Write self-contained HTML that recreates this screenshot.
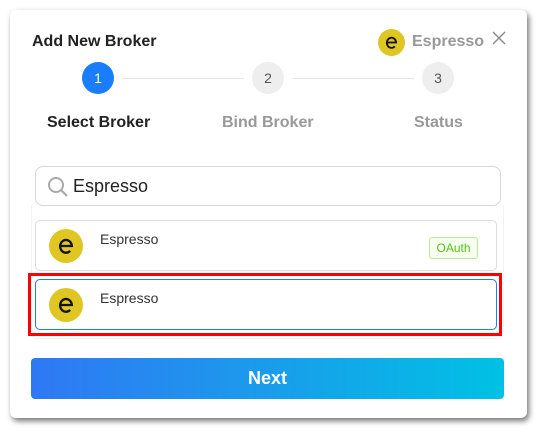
<!DOCTYPE html>
<html><head><style>
*{margin:0;padding:0;box-sizing:border-box}
body{width:544px;height:438px;background:#fff;font-family:"Liberation Sans",sans-serif;position:relative;overflow:hidden}
.card{position:absolute;left:10px;top:10px;width:517px;height:408px;background:#fff;border-radius:6px;box-shadow:2px 3px 6px rgba(0,0,0,.55)}
.a{position:absolute}
.step{position:absolute;width:32px;height:32px;border-radius:50%;background:#eee;color:#555;font-size:14px;text-align:center;line-height:32px}
.lbl{position:absolute;font-size:16px;font-weight:bold;color:#999;top:114px}
.line{position:absolute;height:1px;background:#e6e6e6;top:78px}
.item{position:absolute;left:35px;width:462px;height:51px;border:1px solid #ddd;border-radius:5px;background:#fff}
.nm{position:absolute;left:64px;top:10px;font-size:14px;color:#333}
</style></head><body>
<div class="card"></div>
<div class="a" style="left:32px;top:33px;font-size:16px;font-weight:bold;color:#222">Add New Broker</div>
<svg class="a" style="left:378px;top:29px" width="27" height="27" viewBox="0 0 32 32"><circle cx="16" cy="16" r="16" fill="#dfc623"/><path d="M10.5 16h11a5.5 6 0 1 0-1.6 4.6" fill="none" stroke="#111" stroke-width="2.2"/></svg>
<div class="a" style="left:412px;top:33px;font-size:16px;font-weight:bold;color:#999">Espresso</div>
<svg class="a" style="left:492px;top:31px" width="14" height="14" viewBox="0 0 14 14"><path d="M1 1L13 13M13 1L1 13" stroke="#888" stroke-width="1.4"/></svg>
<div class="step" style="left:82px;top:62px;background:#1a7cff;color:#fff">1</div>
<div class="step" style="left:252px;top:62px">2</div>
<div class="step" style="left:422px;top:62px">3</div>
<div class="line" style="left:122px;width:122px"></div>
<div class="line" style="left:293px;width:121px"></div>
<div class="lbl" style="left:47px;color:#222">Select Broker</div>
<div class="lbl" style="left:222px">Bind Broker</div>
<div class="lbl" style="left:414px">Status</div>
<div class="a" style="left:31px;top:205px;width:473px;height:134px;border:1px solid #f2f2f2;border-top:none;border-radius:0 0 6px 6px"></div>
<div class="a" style="left:35px;top:166px;width:466px;height:40px;border:1px solid #d6d6d6;border-radius:8px;background:#fff"></div>
<svg class="a" style="left:46px;top:175px" width="24" height="24" viewBox="0 0 24 24"><circle cx="10" cy="10" r="7" fill="none" stroke="#aaa" stroke-width="2"/><path d="M15 15l6 6" stroke="#aaa" stroke-width="2.2"/></svg>
<div class="a" style="left:73px;top:176px;font-size:18px;color:#222">Espresso</div>
<div class="item" style="top:220px">
<svg class="a" style="left:13px;top:8px" width="34" height="34" viewBox="0 0 32 32"><circle cx="16" cy="16" r="16" fill="#dfc623"/><path d="M10.5 16h11a5.5 6 0 1 0-1.6 4.6" fill="none" stroke="#111" stroke-width="2.2"/></svg>
<div class="nm">Espresso</div>
<div class="a" style="left:393px;top:16px;width:49px;height:22px;border:1px solid #b7eb8f;background:#f6ffed;color:#52c41a;font-size:12px;text-align:center;line-height:20px;border-radius:3px">OAuth</div>
</div>
<div class="a" style="left:28px;top:273px;width:474px;height:63px;border:3px solid #f00"></div>
<div class="item" style="top:279px;border-color:#1a7cff">
<svg class="a" style="left:13px;top:8px" width="34" height="34" viewBox="0 0 32 32"><circle cx="16" cy="16" r="16" fill="#dfc623"/><path d="M10.5 16h11a5.5 6 0 1 0-1.6 4.6" fill="none" stroke="#111" stroke-width="2.2"/></svg>
<div class="nm">Espresso</div>
</div>
<div class="a" style="left:31px;top:358px;width:473px;height:41px;border-radius:4px;background:linear-gradient(90deg,#2f78f4,#1f95ec 40%,#00c1e4);color:#fff;font-size:18px;font-weight:bold;text-align:center;line-height:41px">Next</div>
</body></html>
